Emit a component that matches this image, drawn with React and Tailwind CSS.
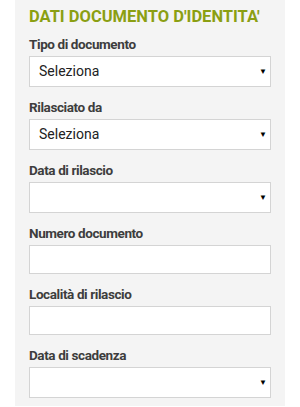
import React from 'react'

const fields = [
  { label: 'Tipo di documento', type: 'select', value: 'Seleziona' },
  { label: 'Rilasciato da', type: 'select', value: 'Seleziona' },
  { label: 'Data di rilascio', type: 'select', value: '' },
  { label: 'Numero documento', type: 'input' },
  { label: 'Località di rilascio', type: 'input' },
  { label: 'Data di scadenza', type: 'select', value: '' },
]

const App = () => {
  return (
    <div className="w-[300px] h-[407px] bg-white overflow-hidden" style={{ fontFamily: 'Roboto, "Liberation Sans", sans-serif' }}>
      <div className="ml-[15px] w-[270px] h-[406px] bg-[#f4f4f4] px-[14px] pt-[9px]">
        {/* Section title */}
        <h2 className="text-[16.5px] leading-[16px] font-bold text-[#8b9f12] mb-[11px]">
          DATI DOCUMENTO D'IDENTITA'
        </h2>

        {fields.map((field, index) => (
          <div key={index} className="mb-[12px]">
            <label className="block text-[13.5px] leading-[16px] font-bold tracking-[-0.4px] text-[#3d3d3d] mb-[4px]">
              {field.label}
            </label>
            {field.type === 'select' ? (
              <div className="h-[31px] bg-white border border-[#d4d4d4] flex items-center justify-between pl-[9px] pr-[3px]">
                <span className="text-[14px] text-[#222]">{field.value}</span>
                <span className="text-[8px] text-black">▼</span>
              </div>
            ) : (
              <div className="h-[29px] bg-white border border-[#d4d4d4]" />
            )}
          </div>
        ))}
      </div>
    </div>
  )
}

export default App
